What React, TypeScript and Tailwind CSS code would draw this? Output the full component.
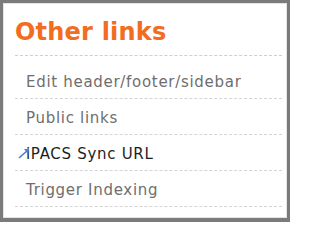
const LINKS = [
  { label: "Edit header/footer/sidebar" },
  { label: "Public links" },
  { label: "iPACS Sync URL", hover: true },
  { label: "Trigger Indexing" },
];

export default function App() {
  return (
    <div
      className="w-[290px] h-[222px] bg-[#7b7b7b] pt-[3px] px-[3px] pb-[4px]"
      style={{ fontFamily: '"DejaVu Sans", Verdana, sans-serif' }}
    >
      <div className="h-full bg-white pl-[11px] pr-[4px] border border-[#e4e4e4]">
        {/* Header */}
        <h2 className="pt-[15px] pb-[9px] text-[24px] leading-[27px] font-bold text-[#f26d21] tracking-[0.2px] border-b border-dashed border-[#cfcfcf]">
          Other links
        </h2>

        {/* Links */}
        <ul className="pt-[7px]">
          {LINKS.map((link) => (
            <li
              key={link.label}
              className="relative h-[36px] flex items-center pt-[3px] pl-[11px] border-b border-dashed border-[#d4d4d4]"
            >
              {link.hover && (
                <svg
                  className="absolute left-[3px] top-[12px]"
                  width="12"
                  height="12"
                  viewBox="0 0 12 12"
                >
                  <path d="M1 11 L10 3" stroke="#4a7fd0" strokeWidth="1.6" fill="none" />
                  <path d="M6 2 L11 2 L10 7 Z" fill="#4a7fd0" />
                </svg>
              )}
              <span
                className={`text-[15px] leading-none tracking-[0.7px] ${
                  link.hover ? "text-[#1e1e1e]" : "text-[#6e6e6e]"
                }`}
              >
                {link.label}
              </span>
            </li>
          ))}
        </ul>
      </div>
    </div>
  );
}
